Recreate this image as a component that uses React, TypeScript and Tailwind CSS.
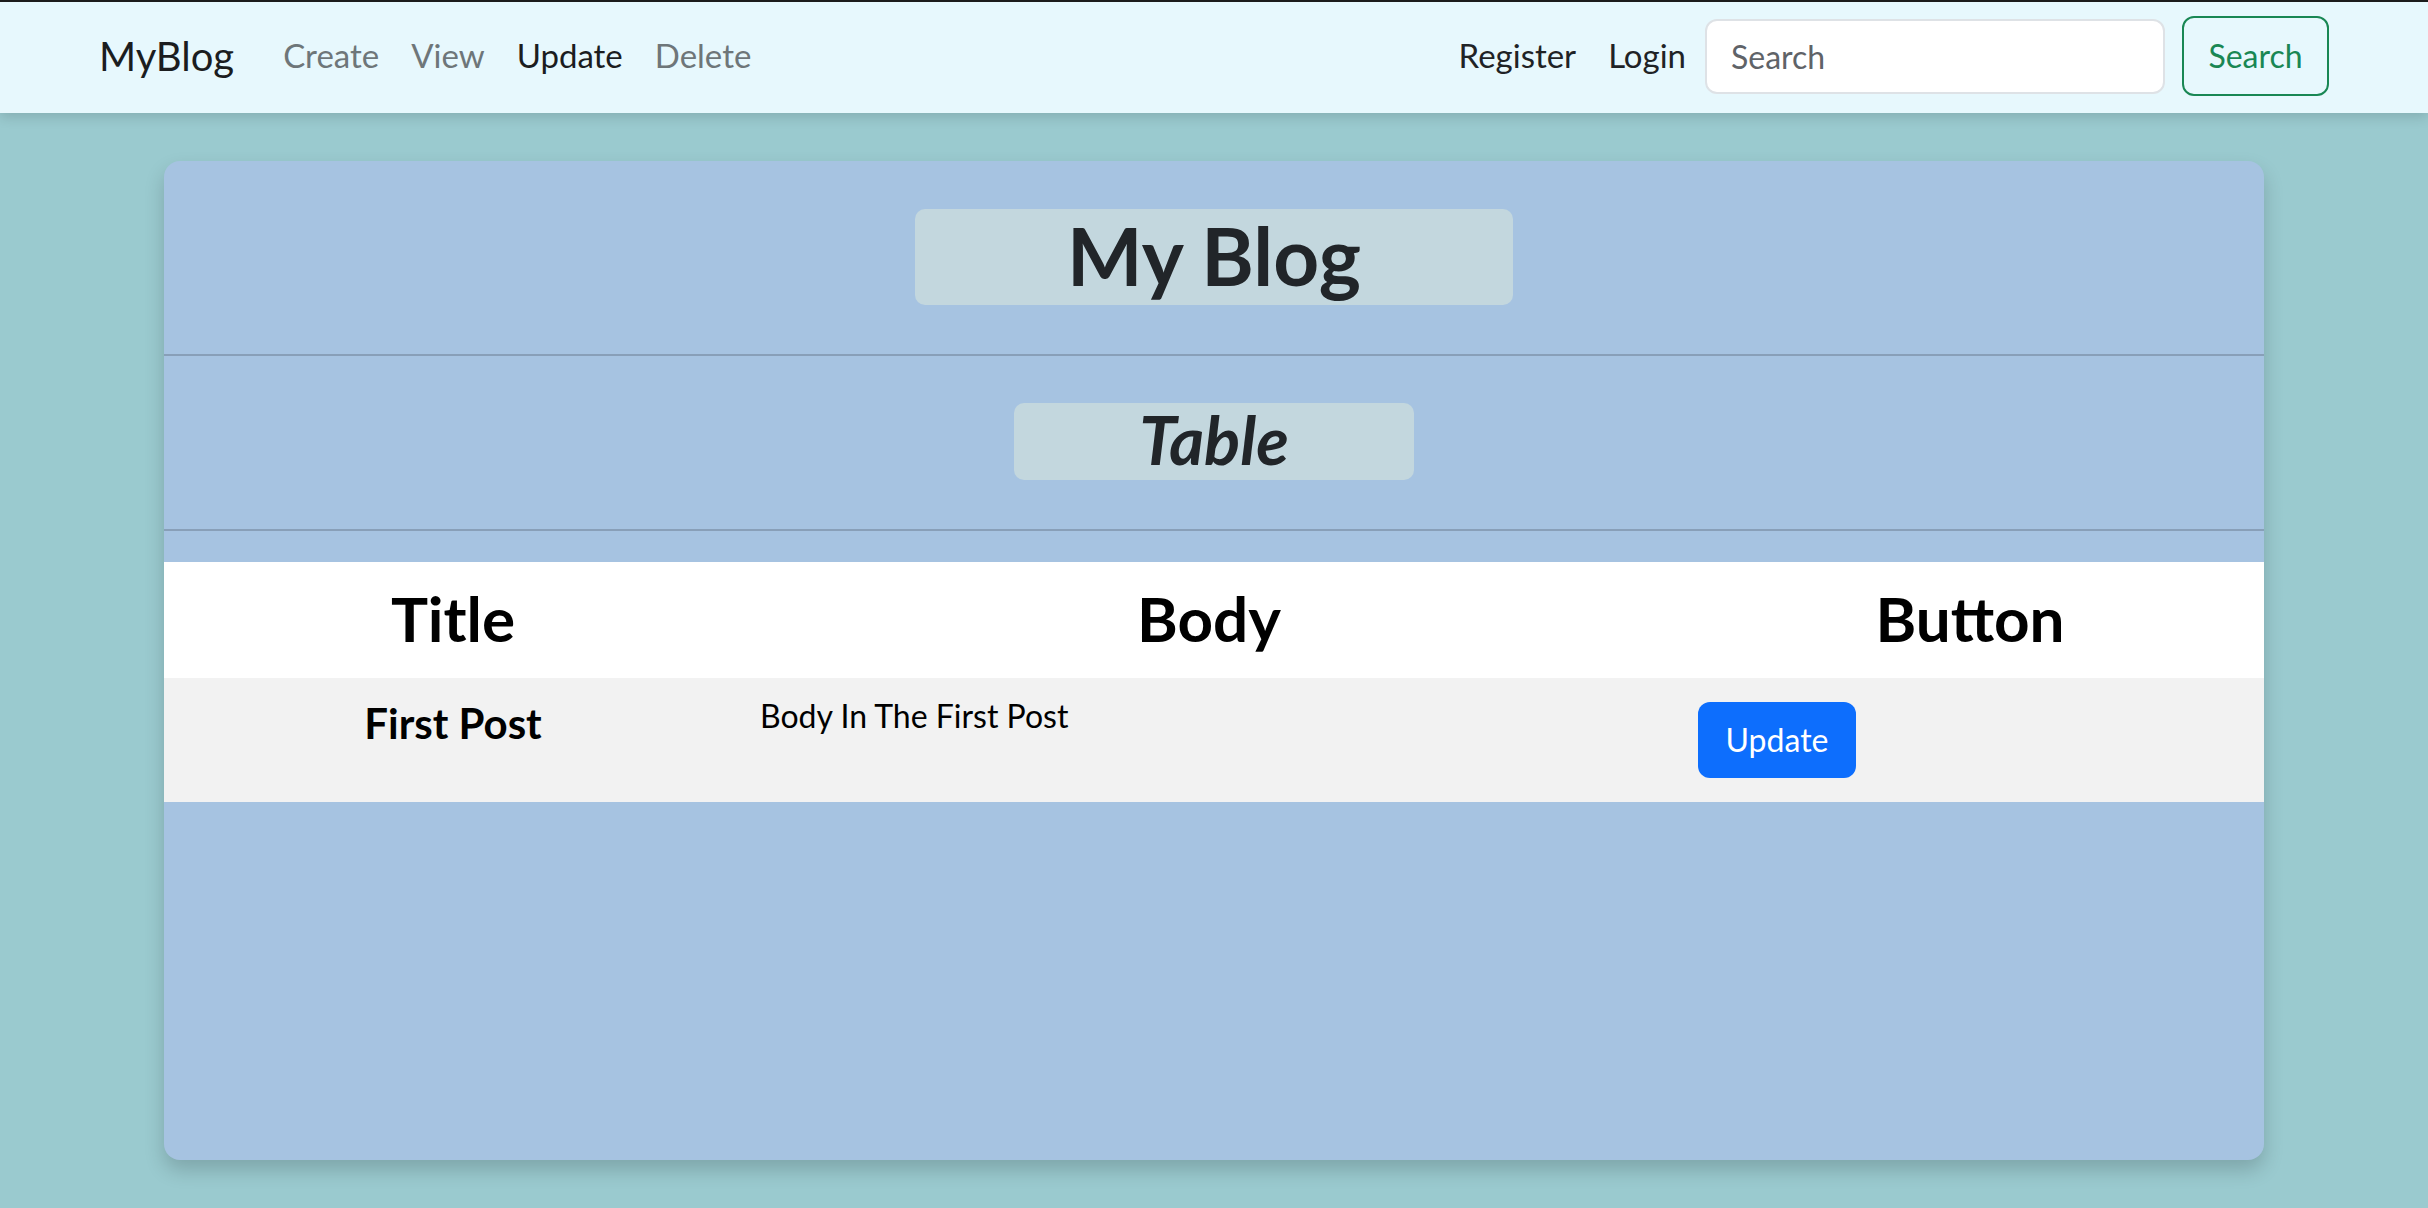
export default function App() {
  return (
    <div
      className="min-h-screen bg-[#9acacf]"
      style={{ fontFamily: "Lato, 'Noto Sans', sans-serif" }}
    >
      {/* Navbar */}
      <nav className="relative z-10 h-[113px] bg-[#e7f8fd] border-t-2 border-[#1c1c1c] shadow-[0_4px_12px_rgba(0,0,0,0.14)] flex items-center px-[99px] pb-[3px]">
        <span className="text-[40px] text-[#1b1d1f] mr-[33px]">MyBlog</span>
        <div className="flex items-center text-[33px]">
          <a className="px-[16px] text-[#6e7679]">Create</a>
          <a className="px-[16px] text-[#6e7679]">View</a>
          <a className="px-[16px] text-[#1b1d1f]">Update</a>
          <a className="px-[16px] text-[#6e7679]">Delete</a>
        </div>
        <div className="ml-auto flex items-center text-[33px]">
          <a className="px-[16px] text-[#1f2326]">Register</a>
          <a className="px-[16px] text-[#1f2326]">Login</a>
          <input
            placeholder="Search"
            className="ml-[3px] w-[460px] h-[75px] bg-white border-2 border-[#dee2e6] rounded-[12px] px-[24px] text-[32px] text-[#212529] placeholder:text-[#5f6368] outline-none"
          />
          <button className="ml-[17px] w-[147px] h-[80px] border-2 border-[#198754] rounded-[12px] text-[32px] text-[#198754]">
            Search
          </button>
        </div>
      </nav>

      {/* Card */}
      <main className="px-[164px] pt-[48px]">
        <div className="h-[999px] bg-[#a6c3e1] rounded-[16px] shadow-[0_10px_20px_rgba(0,0,0,0.18)] pt-[48px] overflow-hidden">
          <div className="mx-auto w-[598px] h-[96px] bg-[#c3d7de] rounded-[10px] flex items-center justify-center pb-[5px]">
            <h1 className="text-[80px] font-bold text-[#212529] leading-none">My Blog</h1>
          </div>
          <div className="mt-[49px] h-[2px] bg-[#889fb8]" />
          <div className="mt-[47px] mx-auto w-[400px] h-[77px] bg-[#c3d7de] rounded-[10px] flex items-center justify-center pb-[4px]">
            <h2 className="text-[67px] font-bold italic text-[#212529] leading-none">Table</h2>
          </div>
          <div className="mt-[49px] h-[2px] bg-[#889fb8]" />

          {/* Table */}
          <div className="mt-[31px]">
            <div className="grid grid-cols-[578px_934px_1fr] h-[116px] bg-white items-center text-center text-[62px] font-bold text-black pb-[3px]">
              <div>Title</div>
              <div>Body</div>
              <div>Button</div>
            </div>
            <div className="grid grid-cols-[578px_934px_1fr] h-[124px] bg-[#f2f2f2] items-start text-black">
              <div className="pt-[14px] text-center text-[42px] font-bold">First Post</div>
              <div className="pt-[14px] pl-[18px] text-[32px] leading-[1.5]">Body In The First Post</div>
              <div className="pl-[22px] pt-[24px]">
                <button className="w-[158px] h-[76px] bg-[#0d6efd] rounded-[12px] text-[32px] text-white">
                  Update
                </button>
              </div>
            </div>
          </div>
        </div>
      </main>
    </div>
  );
}
